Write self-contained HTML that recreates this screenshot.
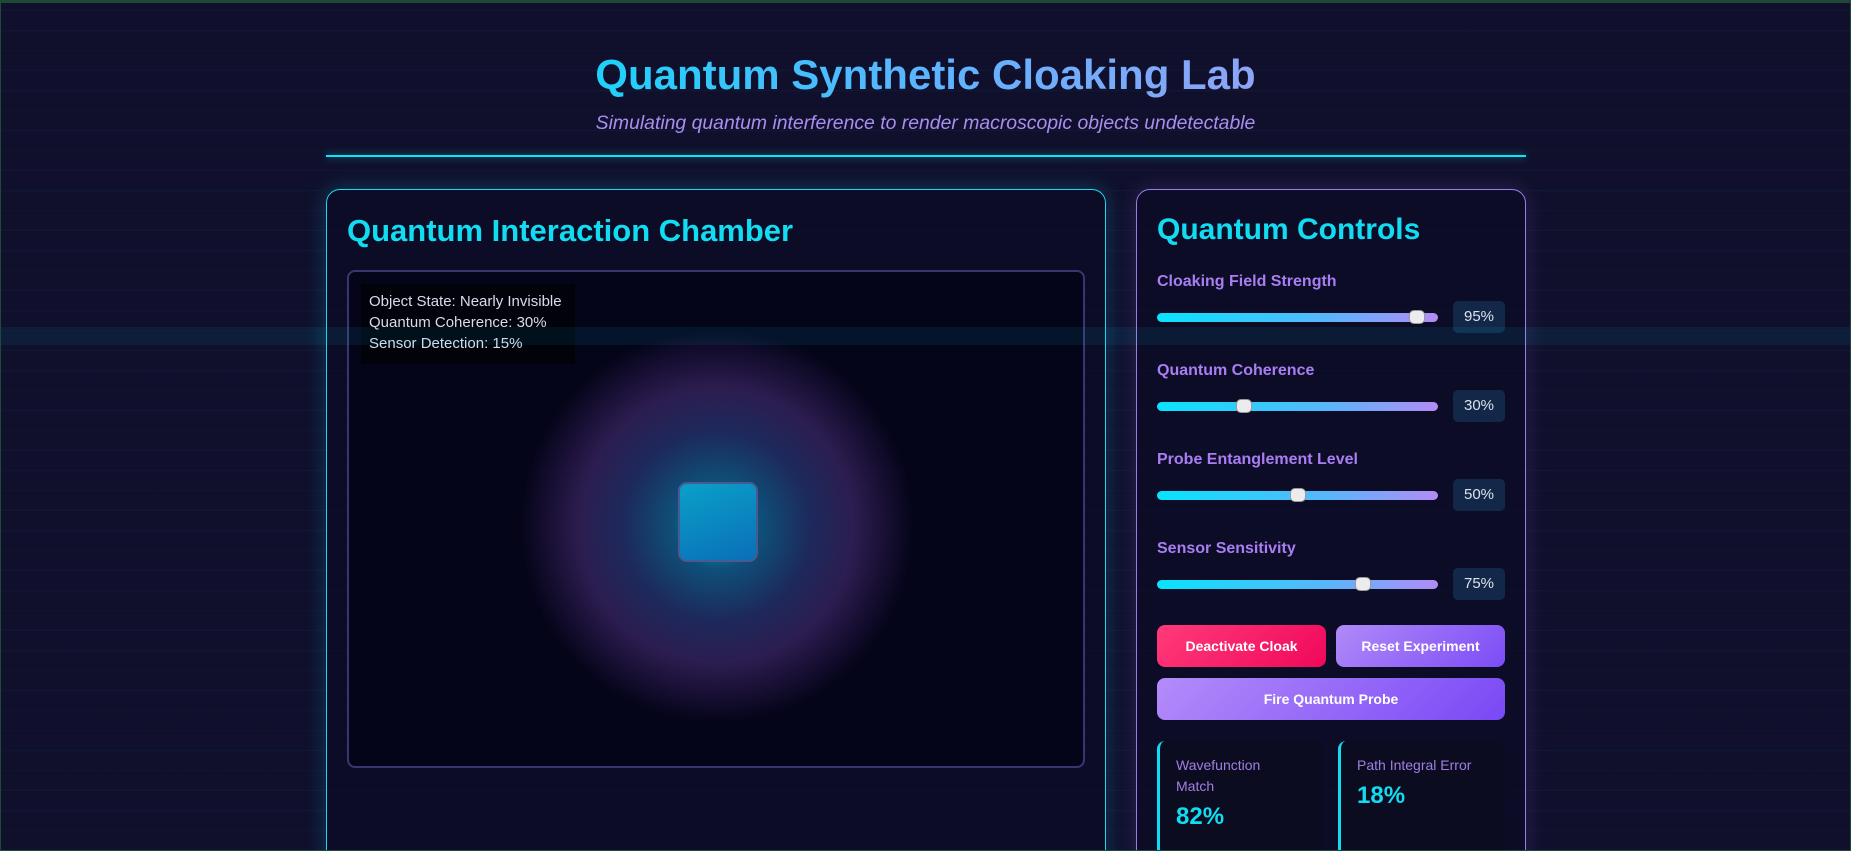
<!DOCTYPE html>
<html><head><meta charset="utf-8"><style>
*{box-sizing:border-box;margin:0;padding:0}
html,body{width:1851px;height:851px;overflow:hidden}
body{background:#10102c;font-family:"Liberation Sans",sans-serif;position:relative;
background-image:repeating-linear-gradient(0deg,rgba(0,240,255,0.035) 0 1px,transparent 1px 20px);}
.frame{position:absolute;inset:0;border:1px solid #1d4a35;border-top:3px solid #1d4a35;pointer-events:none;z-index:10}
.abs{position:absolute}
h1{position:absolute;left:0;width:1851px;top:51px;text-align:center;font-size:42px;font-weight:bold;
background:linear-gradient(90deg,#10d8f8 28%,#5cb4ff 50%,#9aa0f5 72%);-webkit-background-clip:text;color:transparent}
.sub{position:absolute;left:0;width:1851px;top:112px;text-align:center;font-size:19.4px;font-style:italic;color:#a98ef0}
.rule{left:326px;top:155px;width:1200px;height:2px;background:#0ee6f8;box-shadow:0 0 8px rgba(14,230,248,.6)}
.panel{border-radius:14px;background:rgba(10,10,36,.6)}
.lp{left:326px;top:189px;width:780px;height:700px;border:1px solid #1ad8f0;box-shadow:0 0 22px rgba(20,200,240,.25)}
.rp{left:1136px;top:189px;width:390px;height:700px;border:1px solid #9a7ee6;box-shadow:0 0 22px rgba(150,110,240,.2)}
.ph{font-size:31px;font-weight:bold;color:#12dcf2}
.chamber{left:347px;top:270px;width:738px;height:498px;border:2px solid #3a3570;border-radius:8px;background:#05051a;overflow:hidden}
.info{left:12px;top:12px;width:214px;height:80px;background:rgba(0,0,0,.55);color:#d8dcec;font-size:15px;line-height:21px;padding:7px 6px 0 8px}
.glow{left:168px;top:58px;width:400px;height:392px;border-radius:50%;
background:radial-gradient(circle closest-side,rgba(0,200,225,.85) 0,rgba(20,130,185,.6) 22%,rgba(45,65,135,.6) 48%,rgba(70,45,115,.6) 70%,rgba(60,35,100,.45) 82%,rgba(5,5,26,0) 100%)}
.sq{left:329px;top:210px;width:80px;height:80px;border-radius:9px;border:2px solid #4a5a90;background:linear-gradient(160deg,#0aa0c8,#0a6fb8)}
.lbl{font-size:16px;font-weight:bold;color:#a97ef2}
.track{height:9px;width:281px;border-radius:5px;background:linear-gradient(90deg,#08e4fb,#58b6fb 60%,#b28cf5)}
.thumb{width:16px;height:14px;border-radius:5px;background:#ececef;border:1px solid #999;top:-3px}
.val{width:52px;height:32px;border-radius:5px;background:#132848;color:#dbe2ee;font-size:15px;text-align:center;line-height:32px}
.btn{height:42px;border-radius:8px;color:#fff;font-size:14px;font-weight:bold;text-align:center;line-height:42px}
.card{height:120px;border-radius:8px;background:#0c0c20;border-left:3px solid #12dcf2;padding:14px 16px}
.card .t{font-size:14px;color:#a07ee4;line-height:21px}
.card .n{font-size:24px;font-weight:bold;color:#12dcf2;margin-top:6px}
.band{left:0;top:327px;width:1851px;height:18px;background:rgba(0,230,250,.07);z-index:5}
</style></head><body>
<h1>Quantum Synthetic Cloaking Lab</h1>
<div class="sub">Simulating quantum interference to render macroscopic objects undetectable</div>
<div class="abs rule"></div>
<div class="abs panel lp"></div>
<div class="abs panel rp"></div>
<div class="abs ph" style="left:347px;top:213px">Quantum Interaction Chamber</div>
<div class="abs chamber">
 <div class="abs glow"></div>
 <div class="abs sq"></div>
 <div class="abs info">Object State: Nearly Invisible<br>Quantum Coherence: 30%<br>Sensor Detection: 15%</div>
</div>
<div class="abs ph" style="left:1157px;top:213px;font-size:30px">Quantum Controls</div>

<div class="abs lbl" style="left:1157px;top:273px">Cloaking Field Strength</div>
<div class="abs track" style="left:1157px;top:313px"><div class="abs thumb" style="left:252px"></div></div>
<div class="abs val" style="left:1453px;top:301px">95%</div>

<div class="abs lbl" style="left:1157px;top:362px">Quantum Coherence</div>
<div class="abs track" style="left:1157px;top:402px"><div class="abs thumb" style="left:79px"></div></div>
<div class="abs val" style="left:1453px;top:390px">30%</div>

<div class="abs lbl" style="left:1157px;top:451px">Probe Entanglement Level</div>
<div class="abs track" style="left:1157px;top:491px"><div class="abs thumb" style="left:133px"></div></div>
<div class="abs val" style="left:1453px;top:479px">50%</div>

<div class="abs lbl" style="left:1157px;top:540px">Sensor Sensitivity</div>
<div class="abs track" style="left:1157px;top:580px"><div class="abs thumb" style="left:198px"></div></div>
<div class="abs val" style="left:1453px;top:568px">75%</div>

<div class="abs btn" style="left:1157px;top:625px;width:169px;background:linear-gradient(135deg,#ff3a7a,#f0085a)">Deactivate Cloak</div>
<div class="abs btn" style="left:1336px;top:625px;width:169px;background:linear-gradient(135deg,#b08af8,#7c4cf6)">Reset Experiment</div>
<div class="abs btn" style="left:1157px;top:678px;width:348px;background:linear-gradient(135deg,#b48cfa,#7a48f6)">Fire Quantum Probe</div>

<div class="abs card" style="left:1157px;top:741px;width:166px"><div class="t">Wavefunction<br>Match</div><div class="n">82%</div></div>
<div class="abs card" style="left:1338px;top:741px;width:167px"><div class="t">Path Integral Error</div><div class="n">18%</div></div>

<div class="abs band"></div>
<div class="frame"></div>
</body></html>
